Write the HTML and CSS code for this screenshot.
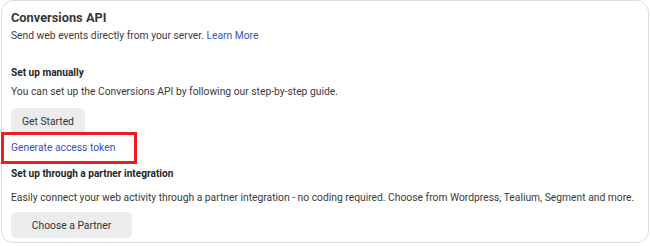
FILE: index.html
```html
<!DOCTYPE html>
<html lang="en">
<head>
  <meta charset="UTF-8" />
  <title>Conversions API</title>
  <link rel="stylesheet" href="styles.css">
</head>
<body>
  <div class="card">
    <h1 class="card-title">Conversions API</h1>
    <p class="card-sub">Send web events directly from your server. <a href="#">Learn More</a></p>

    <h2 class="section-title first">Set up manually</h2>
    <p class="section-text">You can set up the Conversions API by following our step-by-step guide.</p>
    <button class="btn btn-start">Get Started</button>

    <div class="token-row">
      <a href="#">Generate access token</a>
      <div class="highlight"></div>
    </div>

    <h2 class="section-title">Set up through a partner integration</h2>
    <p class="section-text partner-text">Easily connect your web activity through a partner integration - no coding required. Choose from Wordpress, Tealium, Segment and more.</p>
    <button class="btn btn-partner">Choose a Partner</button>
  </div>
</body>
</html>
```

FILE: styles.css
```css
* {
  box-sizing: border-box;
}

body {
  margin: 0;
  background: #fff;
  font-family: Roboto, 'Liberation Sans', sans-serif;
  color: #3a3a3a;
}

.card {
  margin-left: 1px;
  width: 648px;
  height: 243px;
  border: 1px solid #dcdde3;
  border-radius: 12px;
  padding: 8px 9px 4px;
}

.card-title {
  margin: 0;
  font-size: 12.8px;
  line-height: 18px;
  font-weight: 700;
  color: #383838;
}

.card-sub {
  margin: 1px 0 0;
  font-size: 10.3px;
  line-height: 16px;
}

a {
  color: #3354c4;
  text-decoration: none;
}

.section-title {
  margin: 10px 0 0;
  font-size: 10.1px;
  line-height: 16px;
  font-weight: 700;
  color: #262626;
}

.section-title.first {
  margin-top: 21px;
}

.section-text {
  margin: 3px 0 0;
  font-size: 10.3px;
  line-height: 16px;
  white-space: nowrap;
}

.partner-text {
  margin-top: 8px;
}

.btn {
  display: block;
  border: none;
  border-radius: 5px;
  background: #ececec;
  color: #333;
  font-family: inherit;
  font-size: 10.3px;
  height: 26px;
  padding: 0;
  white-space: nowrap;
}

.btn-start {
  margin-top: 8px;
  width: 74px;
}

.btn-partner {
  margin-top: 6px;
  width: 121px;
}

.token-row {
  position: relative;
  margin-top: 6px;
  font-size: 10.3px;
  line-height: 16px;
}

.highlight {
  position: absolute;
  left: -10px;
  top: -8px;
  width: 136px;
  height: 32px;
  border: 3px solid #ee1c1c;
}
```
